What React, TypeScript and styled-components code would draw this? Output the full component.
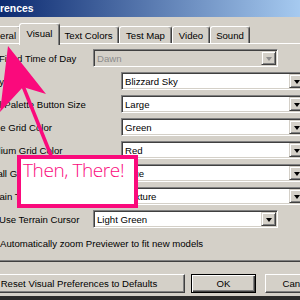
import React from "react";
import styled, { createGlobalStyle, css } from "styled-components";

const Global = createGlobalStyle`
  html, body { margin: 0; padding: 0; }
  body {
    width: 300px; height: 300px; overflow: hidden;
    background: #d4d0c8;
    font-family: "Liberation Sans", Arial, sans-serif;
    font-size: 9.6px; color: #000;
  }
`;

const Window = styled.div`
  position: relative;
  width: 300px; height: 300px; overflow: hidden;
  display: flex; flex-direction: column;
  background: #d4d0c8;
`;

const TitleBar = styled.div`
  flex: none; height: 17px;
  background: linear-gradient(to right, #0c2a70, #a6caf0);
  display: flex; align-items: center;
`;

const Title = styled.span`
  margin-left: -26px; color: #fff; font-weight: bold;
  font-size: 10.4px; white-space: nowrap;
`;

const TabRow = styled.div`
  flex: none; height: 20px; margin: 6px 0 0 -23px;
  display: flex; align-items: flex-end;
  position: relative; z-index: 1;
`;

const Tab = styled.div<{ $w: number; $active?: boolean }>`
  flex: none; box-sizing: border-box;
  width: ${(p) => p.$w}px; height: 17px;
  padding-top: 3px; line-height: 11px; text-align: center;
  white-space: nowrap; background: #d4d0c8;
  border-top: 1px solid #fff; border-left: 1px solid #fff;
  border-right: 1px solid #404040;
  border-radius: 3px 3px 0 0;
  box-shadow: inset -1px 0 #808080;
  ${(p) =>
    p.$active &&
    css`
      width: ${p.$w + 4}px; height: 22px; margin: 0 -2px -2px;
      padding-top: 4px; position: relative; z-index: 2;
    `}
`;

const Panel = styled.div`
  flex: none; box-sizing: border-box; height: 219px;
  border-top: 1px solid #fff; border-bottom: 1px solid #404040;
  box-shadow: inset 0 -1px #808080;
  padding-top: 5px;
  display: flex; flex-direction: column; gap: 5px;
`;

const Row = styled.div<{ $x: number }>`
  display: grid; grid-template-columns: ${(p) => p.$x}px 185px;
  height: 18px; align-items: center;
`;

const Label = styled.div<{ $indent: number }>`
  display: flex; align-items: center; gap: 4px;
  margin-left: ${(p) => p.$indent}px; white-space: nowrap; min-width: 0;
`;

const Check = styled.span`
  flex: none; width: 13px; height: 13px; box-sizing: border-box;
  margin-left: -17px; background: #fff;
  border: 1px solid; border-color: #808080 #fff #fff #808080;
  box-shadow: inset 1px 1px #404040;
`;

const Combo = styled.div`
  box-sizing: border-box; width: 185px; height: 18px; padding: 1px;
  display: flex;
  border: 1px solid; border-color: #808080 #fff #fff #808080;
  box-shadow: inset 1px 1px #404040, inset -1px -1px #d4d0c8;
`;

const Field = styled.div<{ $disabled?: boolean }>`
  flex: 1; display: flex; align-items: center; padding-left: 2px;
  white-space: nowrap; overflow: hidden;
  background: ${(p) => (p.$disabled ? "#d4d0c8" : "#fff")};
  color: ${(p) => (p.$disabled ? "#8c8c8c" : "#000")};
`;

const DropButton = styled.div`
  flex: none; width: 15px; box-sizing: border-box;
  display: flex; align-items: center; justify-content: center;
  background: #d4d0c8;
  border: 1px solid; border-color: #d4d0c8 #404040 #404040 #d4d0c8;
  box-shadow: inset 1px 1px #fff, inset -1px -1px #808080;
`;

const Caret = styled.span<{ $disabled?: boolean }>`
  width: 0; height: 0; margin-top: 1px;
  border-left: 3.5px solid transparent; border-right: 3.5px solid transparent;
  border-top: 4px solid ${(p) => (p.$disabled ? "#8c8c8c" : "#000")};
`;

const CheckRow = styled.div`
  height: 20px; display: flex; align-items: center; white-space: nowrap;
`;

const ButtonRow = styled.div`
  flex: none; display: flex; margin: 12px 0 0 -27px; gap: 6px;
`;

const Button = styled.button<{ $w: number; $default?: boolean; $ml?: number }>`
  flex: none; box-sizing: border-box; width: ${(p) => p.$w}px; height: 19px;
  margin: 0 0 0 ${(p) => p.$ml ?? 0}px; padding: 0;
  font: inherit; color: #000; background: #d4d0c8; white-space: nowrap;
  border: 1px solid; border-color: #fff #404040 #404040 #fff;
  box-shadow: inset -1px -1px #808080;
  ${(p) =>
    p.$default &&
    css`
      border-color: #000;
      box-shadow: inset 1px 1px #fff, inset -1px -1px #404040, inset -2px -2px #808080;
    `}
`;

const Desktop = styled.div`
  margin-top: auto; flex: none; height: 4px; background: #2a2a2a;
`;

const ArrowLayer = styled.svg`
  position: absolute; left: 0; top: 0; width: 300px; height: 300px;
  pointer-events: none; z-index: 5;
`;

const Note = styled.div`
  position: absolute; left: 17px; top: 155px; z-index: 6;
  box-sizing: border-box; width: 121px; height: 53px;
  border: 4px solid #fa0a7c; background: #fff; color: #fa0a7c;
  font-family: "Open Sans", "DejaVu Sans", sans-serif; font-weight: 300;
  font-size: 19px; letter-spacing: -0.4px; line-height: 22px;
  padding: 0 0 0 2px; white-space: nowrap;
`;

type RowData = {
  label: string; value: string; x: number; indent: number;
  check?: boolean; disabled?: boolean;
};

const rows: RowData[] = [
  { label: "Fixed Time of Day", value: "Dawn", x: 93, indent: -1, check: true, disabled: true },
  { label: "Sky", value: "Blizzard Sky", x: 121, indent: -12 },
  { label: "Tool Palette Button Size", value: "Large", x: 121, indent: -16 },
  { label: "Large Grid Color", value: "Green", x: 121, indent: -19 },
  { label: "Medium Grid Color", value: "Red", x: 121, indent: -18 },
  { label: "Small Grid Color", value: "Blue", x: 121, indent: -17 },
  { label: "Terrain Tile Highlight", value: "Texture", x: 121, indent: -17 },
  { label: "Use Terrain Cursor", value: "Light Green", x: 93, indent: -1, check: true },
];

const tabs = [
  { name: "General", w: 44 },
  { name: "Visual", w: 37, active: true },
  { name: "Text Colors", w: 61 },
  { name: "Test Map", w: 53 },
  { name: "Video", w: 38 },
  { name: "Sound", w: 40 },
];

export default function App() {
  return (
    <Window>
      <Global />
      <TitleBar>
        <Title>Preferences</Title>
      </TitleBar>
      <TabRow>
        {tabs.map((t) => (
          <Tab key={t.name} $w={t.w} $active={t.active}>
            {t.name}
          </Tab>
        ))}
      </TabRow>
      <Panel>
        {rows.map((r) => (
          <Row key={r.label} $x={r.x}>
            <Label $indent={r.indent}>
              {r.check && <Check />}
              <span>{r.label}</span>
            </Label>
            <Combo>
              <Field $disabled={r.disabled}>{r.value}</Field>
              <DropButton>
                <Caret $disabled={r.disabled} />
              </DropButton>
            </Combo>
          </Row>
        ))}
        <CheckRow>
          <Label $indent={0}>
            <Check />
            <span>Automatically zoom Previewer to fit new models</span>
          </Label>
        </CheckRow>
      </Panel>
      <ButtonRow>
        <Button $w={212}>Reset Visual Preferences to Defaults</Button>
        <Button $w={65} $default>OK</Button>
        <Button $w={65} $ml={3}>Cancel</Button>
      </ButtonRow>
      <Desktop />
      <ArrowLayer viewBox="0 0 300 300">
        <polygon points="8,46 46,94 23,87 0,112" fill="#fa0a7c" />
        <line x1="23" y1="86" x2="52" y2="158" stroke="#fa0a7c" strokeWidth="3.5" />
      </ArrowLayer>
      <Note>Then, There!</Note>
    </Window>
  );
}
